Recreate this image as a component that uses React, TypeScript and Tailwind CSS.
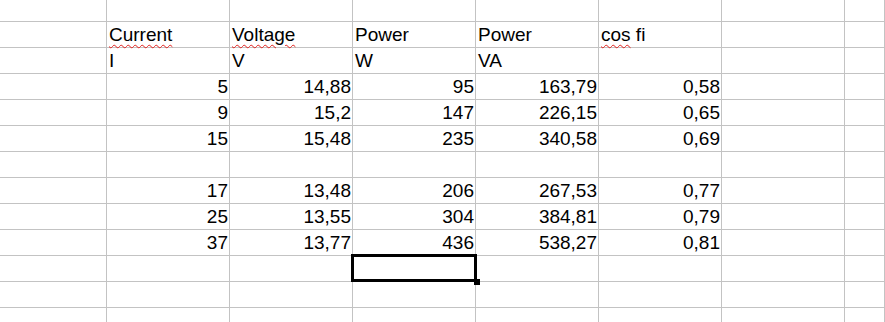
import React from 'react';

type Cell = { text?: string; align?: 'left' | 'right'; squiggle?: string };

const L = (text: string, squiggle?: string): Cell => ({ text, align: 'left', squiggle });
const R = (text: string): Cell => ({ text, align: 'right' });

const rows: Cell[][] = [
  [],
  [{}, L('Current', 'Current'), L('Voltage', 'Voltage'), L('Power'), L('Power'), L('cos fi', 'cos')],
  [{}, L('I'), L('V'), L('W'), L('VA'), {}],
  [{}, R('5'), R('14,88'), R('95'), R('163,79'), R('0,58')],
  [{}, R('9'), R('15,2'), R('147'), R('226,15'), R('0,65')],
  [{}, R('15'), R('15,48'), R('235'), R('340,58'), R('0,69')],
  [],
  [{}, R('17'), R('13,48'), R('206'), R('267,53'), R('0,77')],
  [{}, R('25'), R('13,55'), R('304'), R('384,81'), R('0,79')],
  [{}, R('37'), R('13,77'), R('436'), R('538,27'), R('0,81')],
  [],
  [],
  [],
];

const COLS = 8;

const CellText: React.FC<{ cell: Cell }> = ({ cell }) => {
  if (!cell.text) return null;
  if (cell.squiggle) {
    const rest = cell.text.slice(cell.squiggle.length);
    return (
      <span>
        <span className="underline decoration-wavy decoration-[#e0201c] decoration-1 underline-offset-[3px]">
          {cell.squiggle}
        </span>
        {rest}
      </span>
    );
  }
  return <span>{cell.text}</span>;
};

export default function App() {
  return (
    <div className="w-[885px] h-[322px] overflow-hidden bg-white font-['Liberation_Sans',Arial,sans-serif] text-[19px] text-black">
      <div className="grid grid-cols-[107px_repeat(6,123px)_1fr]">
        {rows.map((row, r) =>
          Array.from({ length: COLS }).map((_, c) => {
            const cell = row[c] ?? {};
            const selected = r === 10 && c === 3;
            return (
              <div
                key={`${r}-${c}`}
                className={`relative flex items-end border-r border-b border-[#c3c3c3] leading-[22px] whitespace-nowrap ${
                  r === 0 ? 'h-[22px]' : 'h-[26px]'
                } ${cell.align === 'right' ? 'justify-end pr-px' : 'justify-start pl-[2px]'} pb-[1px] ${
                  selected ? 'z-10' : ''
                }`}
              >
                <CellText cell={cell} />
                {selected && (
                  <>
                    <div className="absolute -left-[2px] -top-[2px] w-[126px] h-[28px] border-[3px] border-black" />
                    <div className="absolute left-[121px] top-[23px] w-[6px] h-[6px] bg-black" />
                  </>
                )}
              </div>
            );
          })
        )}
      </div>
    </div>
  );
}
